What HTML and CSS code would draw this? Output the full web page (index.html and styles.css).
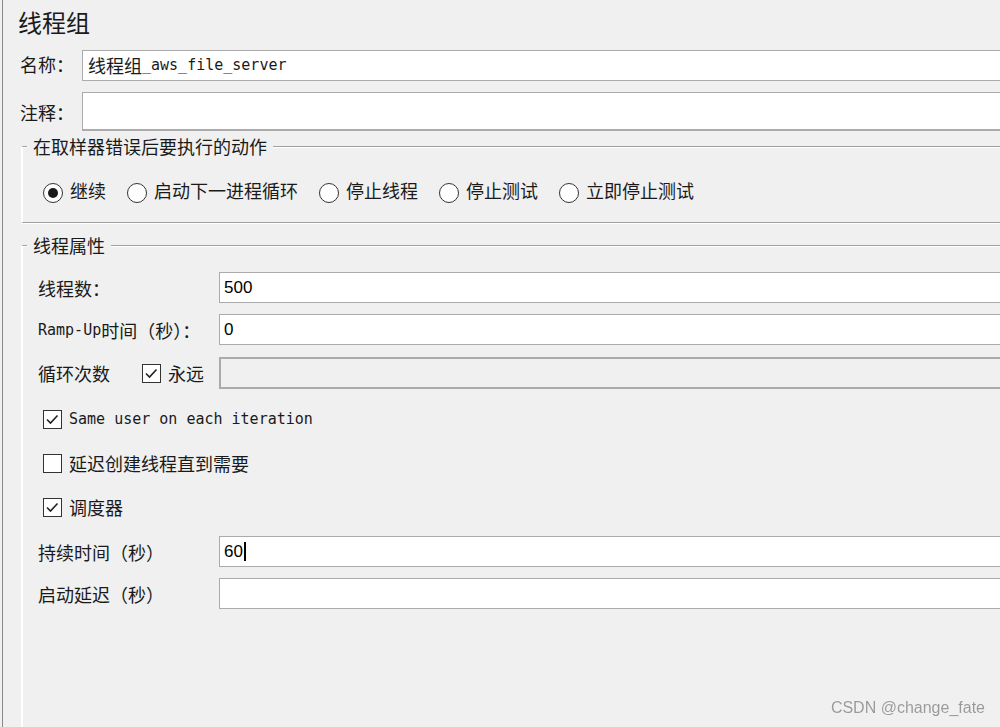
FILE: index.html
```html
<!DOCTYPE html>
<html lang="zh-CN">
<head>
<meta charset="utf-8">
<title>线程组</title>
<link rel="stylesheet" href="styles.css">
</head>
<body>
<div class="panel">
  <h1 class="title">线程组</h1>

  <div class="row row-name">
    <span class="top-label name-label">名称：</span>
    <div class="field field-name"><span>线程组</span><span class="mono">_aws_file_server</span></div>
  </div>
  <div class="row row-comment">
    <span class="top-label">注释：</span>
    <div class="field field-comment"></div>
  </div>

  <fieldset class="group group-error">
    <legend>在取样器错误后要执行的动作</legend>
    <div class="radios">
      <label class="radio-item"><span class="radio checked"></span><span class="radio-text">继续</span></label>
      <label class="radio-item"><span class="radio"></span><span class="radio-text">启动下一进程循环</span></label>
      <label class="radio-item"><span class="radio"></span><span class="radio-text">停止线程</span></label>
      <label class="radio-item"><span class="radio"></span><span class="radio-text">停止测试</span></label>
      <label class="radio-item"><span class="radio"></span><span class="radio-text">立即停止测试</span></label>
    </div>
  </fieldset>

  <fieldset class="group group-thread">
    <legend>线程属性</legend>

    <div class="form-row first-row">
      <span class="form-label">线程数：</span>
      <div class="field">500</div>
    </div>
    <div class="form-row">
      <span class="form-label"><span class="mono">Ramp-Up</span>时间（秒）：</span>
      <div class="field">0</div>
    </div>
    <div class="form-row loop-row">
      <div class="form-label">
        <span class="loop-text">循环次数</span>
        <label class="check-item">
          <span class="checkbox"><svg viewBox="0 0 17 17" width="17" height="17"><polyline points="3,8.5 6.5,12 13.5,4.5" /></svg></span>永远
        </label>
      </div>
      <div class="field field-disabled"></div>
    </div>

    <div class="check-list">
      <label class="check-row">
        <span class="checkbox"><svg viewBox="0 0 17 17" width="17" height="17"><polyline points="3,8.5 6.5,12 13.5,4.5" /></svg></span><span class="mono">Same user on each iteration</span>
      </label>
      <label class="check-row">
        <span class="checkbox"></span>延迟创建线程直到需要
      </label>
      <label class="check-row">
        <span class="checkbox"><svg viewBox="0 0 17 17" width="17" height="17"><polyline points="3,8.5 6.5,12 13.5,4.5" /></svg></span>调度器
      </label>
    </div>

    <div class="form-row duration-row">
      <span class="form-label">持续时间（秒）</span>
      <div class="field">60<span class="caret"></span></div>
    </div>
    <div class="form-row">
      <span class="form-label">启动延迟（秒）</span>
      <div class="field"></div>
    </div>
  </fieldset>
</div>

<div class="watermark">CSDN @change_fate</div>
</body>
</html>
```

FILE: styles.css
```css
html, body {
  margin: 0;
  height: 100%;
  overflow: hidden;
  background: #f0f0f0;
}

body {
  font-family: "Noto Sans CJK SC", sans-serif;
  font-size: 18px;
  color: #1a1a1a;
}

.panel {
  margin-left: 2px;
  border-left: 1px solid #888;
  width: calc(100% - 2px);
  height: 100%;
  box-sizing: border-box;
  display: flex;
  flex-direction: column;
}

.title {
  margin: 0 0 7px;
  padding-left: 15px;
  height: 43px;
  line-height: 43px;
  font-size: 24px;
  font-weight: normal;
}

.mono {
  font-family: "DejaVu Sans Mono", monospace;
  font-size: 15px;
}

.row {
  display: flex;
  align-items: center;
  padding-left: 17px;
}

.row + .row {
  margin-top: 11px;
}

.top-label {
  width: 62px;
  flex: none;
  line-height: 24px;
}

.name-label {
  padding-bottom: 4px;
}

.field {
  flex: 1;
  min-width: 0;
  box-sizing: border-box;
  height: 31px;
  border: 1px solid #ababab;
  border-right: 0;
  background: #fff;
  line-height: 29px;
  padding-left: 4px;
  font-family: "Liberation Sans", sans-serif;
  font-size: 17px;
  color: #000;
  white-space: nowrap;
  display: flex;
  align-items: center;
}

.field-name {
  padding-left: 5px;
  font-family: "Noto Sans CJK SC", sans-serif;
  font-size: 18px;
  color: #1a1a1a;
}

.field-comment {
  height: 39px;
  border-bottom-width: 2px;
}

.field-disabled {
  height: 32px;
  border: 2px solid #ababab;
  border-right: 0;
  background: #f0f0f0;
}

.caret {
  display: inline-block;
  width: 2px;
  height: 19px;
  margin-left: 1px;
  background: #000;
}

.group {
  margin: 5px 0 0 18px;
  padding: 0;
  border: 0;
  border-top: 1px solid #a0a0a0;
  border-left: 2px solid #fff;
  box-shadow: inset 0 1px 0 #fff;
  min-width: 0;
}

.group legend {
  margin-left: 4px;
  padding: 0 6px;
  height: 21px;
  line-height: 21px;
  background: #f0f0f0;
  font-size: 18px;
}

.group-error {
  border-bottom: 1px solid #a0a0a0;
  box-shadow: inset 0 1px 0 #fff, 0 1px 0 #fff;
}

.group-thread {
  margin-top: 12px;
  flex: 1;
}

.radios {
  display: flex;
  align-items: center;
  gap: 21px;
  height: 20px;
  padding: 26px 0 19px 20px;
}

.radio-item {
  display: flex;
  align-items: center;
  gap: 7px;
  line-height: 20px;
  white-space: nowrap;
}

.radio-text {
  padding-bottom: 6px;
}

.radio {
  width: 20px;
  height: 20px;
  box-sizing: border-box;
  border: 1px solid #333;
  border-radius: 50%;
  background: #fff;
  display: flex;
  align-items: center;
  justify-content: center;
  flex: none;
}

.radio.checked::after {
  content: "";
  width: 10px;
  height: 10px;
  border-radius: 50%;
  background: #1a1a1a;
}

.form-row {
  display: flex;
  align-items: center;
  padding-left: 15px;
  margin-top: 11px;
}

.first-row {
  margin-top: 16px;
}

.loop-row {
  margin-top: 12px;
}

.duration-row {
  margin-top: 7px;
}

.form-label {
  width: 181px;
  flex: none;
  line-height: 24px;
  display: flex;
  align-items: center;
  white-space: nowrap;
}

.loop-text {
  width: 104px;
  flex: none;
}

.check-item {
  display: flex;
  align-items: center;
  gap: 7px;
}

.checkbox {
  width: 19px;
  height: 19px;
  box-sizing: border-box;
  border: 1px solid #333;
  background: #fff;
  display: flex;
  align-items: center;
  justify-content: center;
  flex: none;
}

.checkbox svg {
  display: block;
  fill: none;
  stroke: #222;
  stroke-width: 1.6;
}

.check-list {
  margin-top: 8px;
  padding-left: 20px;
}

.check-row {
  display: flex;
  align-items: center;
  gap: 7px;
  height: 44px;
  line-height: 24px;
}

.watermark {
  position: fixed;
  right: 15px;
  bottom: 10px;
  font-family: "Liberation Sans", sans-serif;
  font-size: 16px;
  line-height: 18px;
  color: #999;
  text-shadow: 0 0 1px #fff;
}
```
